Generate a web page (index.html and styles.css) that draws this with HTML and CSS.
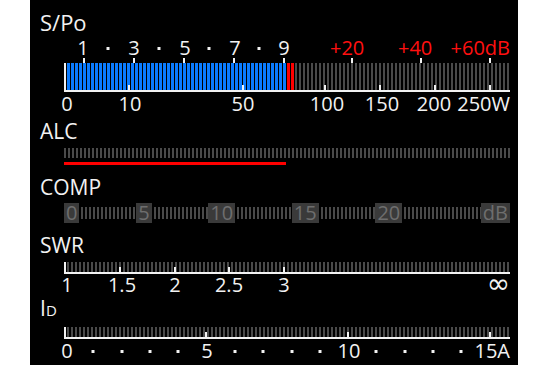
FILE: index.html
```html
<!DOCTYPE html>
<html>
<head>
<meta charset="utf-8">
<link rel="stylesheet" href="styles.css">
</head>
<body>
<div class="panel">
  <section class="meter">
    <div class="title title-spo">S/Po</div>
    <div class="track">
      <div class="scale scale-top">
        <span class="c" style="left:19px">1</span>
        <i class="dot" style="left:44px"></i>
        <span class="c" style="left:70px">3</span>
        <i class="dot" style="left:95px"></i>
        <span class="c" style="left:121px">5</span>
        <i class="dot" style="left:145px"></i>
        <span class="c" style="left:171px">7</span>
        <i class="dot" style="left:195px"></i>
        <span class="c" style="left:220px">9</span>
        <span class="red" style="left:266px">+20</span>
        <span class="red" style="left:334px">+40</span>
        <span class="red r">+60dB</span>
      </div>
      <div class="bar-wrap bar-wrap-s">
        <i class="tick tick-up" style="left:20px"></i>
        <i class="tick tick-up" style="left:70px"></i>
        <i class="tick tick-up" style="left:120px"></i>
        <i class="tick tick-up" style="left:170px"></i>
        <i class="tick tick-up" style="left:220px"></i>
        <i class="tick tick-up" style="left:288px"></i>
        <i class="tick tick-up" style="left:357px"></i>
        <i class="tick tick-up" style="left:426px"></i>
        <div class="bar bar-s">
          <div class="seg seg-blue" style="width:220px"></div>
          <div class="seg seg-red" style="width:8px"></div>
          <div class="seg seg-gray"></div>
        </div>
        <i class="tick tick-dn" style="left:65px"></i>
        <i class="tick tick-dn" style="left:179px"></i>
        <i class="tick tick-dn" style="left:261px"></i>
        <i class="tick tick-dn" style="left:316px"></i>
        <i class="tick tick-dn" style="left:371px"></i>
        <i class="tick tick-dn" style="left:426px"></i>
      </div>
      <div class="scale scale-bottom">
        <span class="c" style="left:3px">0</span>
        <span class="c" style="left:66px">10</span>
        <span class="c" style="left:179px">50</span>
        <span class="c" style="left:263px">100</span>
        <span class="c" style="left:318px">150</span>
        <span class="c" style="left:370px">200</span>
        <span class="r">250W</span>
      </div>
    </div>
  </section>

  <section class="meter">
    <div class="title title-alc">ALC</div>
    <div class="track">
      <div class="seg seg-gray alc-seg"></div>
      <div class="alc-level" style="width:222px"></div>
    </div>
  </section>

  <section class="meter">
    <div class="title title-comp">COMP</div>
    <div class="track comp-row">
      <span class="box">0</span>
      <div class="seg seg-dim comp-seg"></div>
      <span class="box">5</span>
      <div class="seg seg-dim comp-seg"></div>
      <span class="box">10</span>
      <div class="seg seg-dim comp-seg"></div>
      <span class="box">15</span>
      <div class="seg seg-dim comp-seg"></div>
      <span class="box">20</span>
      <div class="seg seg-dim comp-seg comp-seg-long"></div>
      <span class="box">dB</span>
    </div>
  </section>

  <section class="meter">
    <div class="title title-swr">SWR</div>
    <div class="track">
      <div class="bar-wrap">
        <div class="bar bar-thin">
          <div class="seg seg-gray"></div>
        </div>
        <i class="tick tick-dn" style="left:56px"></i>
        <i class="tick tick-dn" style="left:111px"></i>
        <i class="tick tick-dn" style="left:165px"></i>
        <i class="tick tick-dn" style="left:220px"></i>
      </div>
      <div class="scale scale-swr">
        <span class="c" style="left:3px">1</span>
        <span class="c" style="left:58px">1.5</span>
        <span class="c" style="left:111px">2</span>
        <span class="c" style="left:165px">2.5</span>
        <span class="c" style="left:220px">3</span>
        <span class="r inf">∞</span>
      </div>
    </div>
  </section>

  <section class="meter">
    <div class="title title-id">I<span class="sub">D</span></div>
    <div class="track">
      <div class="bar-wrap bar-wrap-id">
        <div class="bar bar-thin">
          <div class="seg seg-gray"></div>
        </div>
        <i class="tick tick-dn" style="left:142px"></i>
        <i class="tick tick-dn" style="left:284px"></i>
        <i class="tick tick-dn" style="left:426px"></i>
      </div>
      <div class="scale scale-id">
        <span class="c" style="left:3px">0</span>
        <i class="dot" style="left:29px"></i>
        <i class="dot" style="left:58px"></i>
        <i class="dot" style="left:86px"></i>
        <i class="dot" style="left:114px"></i>
        <span class="c" style="left:143px">5</span>
        <i class="dot" style="left:171px"></i>
        <i class="dot" style="left:199px"></i>
        <i class="dot" style="left:228px"></i>
        <i class="dot" style="left:256px"></i>
        <span class="c" style="left:285px">10</span>
        <i class="dot" style="left:312px"></i>
        <i class="dot" style="left:341px"></i>
        <i class="dot" style="left:369px"></i>
        <i class="dot" style="left:397px"></i>
        <span class="r">15A</span>
      </div>
    </div>
  </section>
</div>
</body>
</html>
```

FILE: styles.css
```css
* {
  box-sizing: border-box;
  margin: 0;
  padding: 0;
}

html, body {
  background: #fff;
}

body {
  font-family: "Open Sans", "Noto Sans", sans-serif;
}

.panel {
  width: 488px;
  height: 365px;
  margin-left: 30px;
  background: #000;
  color: #f2f2f2;
  padding: 11px 0 0 10px;
  overflow: hidden;
}

.title {
  font-size: 21px;
  line-height: 21px;
  height: 21px;
  white-space: nowrap;
}

.title-spo {
  font-size: 22px;
  line-height: 22px;
  height: 22px;
}

.title-alc { margin-top: 7px; }
.title-comp { margin-top: 12px; }
.title-swr { margin-top: 12px; }
.title-id { margin-top: 3px; }

.title .sub {
  font-size: 15px;
}

.track {
  margin-left: 24px;
  width: 446px;
  position: relative;
}

.scale {
  position: relative;
  height: 20px;
  font-size: 20px;
  line-height: 20px;
}

.scale span {
  position: absolute;
  top: 0;
  white-space: nowrap;
}

.scale .c {
  transform: translateX(-50%);
}

.scale .r {
  right: 0;
}

.scale .red {
  color: #ff1010;
}

.dot {
  position: absolute;
  width: 3px;
  height: 3px;
  background: #f2f2f2;
  top: 9px;
  transform: translateX(-50%);
}

.scale-top { margin-top: 5px; }
.scale-bottom { margin-top: 2px; }
.scale-swr { margin-top: 1px; }
.scale-id { margin-top: 2px; }

.inf {
  font-family: "DejaVu Sans", sans-serif;
  font-size: 28px;
  line-height: 20px;
  top: -1px !important;
}

.bar-wrap {
  position: relative;
  margin-top: 6px;
}

.bar-wrap-s { margin-top: 5px; }
.bar-wrap-id { margin-top: 8px; }

.bar {
  display: flex;
  border-left: 2px solid #f2f2f2;
  border-bottom: 2px solid #f2f2f2;
  padding-left: 1px;
}

.bar-s {
  height: 29px;
}

.bar-thin {
  height: 12px;
}

.seg {
  height: 100%;
}

.seg-blue {
  background: repeating-linear-gradient(to right, #0a7bff 0 3px, transparent 3px 4px);
}

.seg-red {
  background: repeating-linear-gradient(to right, #ff0000 0 3px, transparent 3px 4px);
}

.seg-gray {
  flex: 1;
  background: repeating-linear-gradient(to right, #4a4a4a 0 2px, transparent 2px 4px);
}

.seg-dim {
  background: repeating-linear-gradient(to right, #4a4a4a 0 2px, transparent 2px 4px);
}

.tick {
  position: absolute;
  width: 2px;
  height: 5px;
  background: #f2f2f2;
  transform: translateX(-1px);
}

.tick-up {
  top: -5px;
}

.tick-dn {
  bottom: 2px;
}

.alc-seg {
  margin-top: 6px;
  height: 10px;
  width: 446px;
}

.alc-level {
  margin-top: 4px;
  height: 3px;
  background: #ff0000;
}

.comp-row {
  display: flex;
  align-items: center;
  margin-top: 5px;
  height: 20px;
}

.box {
  height: 20px;
  padding: 0 2px;
  background: #3a3a3a;
  color: #6e6e6e;
  font-size: 20px;
  line-height: 20px;
}

.comp-seg {
  flex: 1;
  height: 12px;
  margin-left: 2px;
}

.comp-seg-long {
  flex: 1.4;
}
```
